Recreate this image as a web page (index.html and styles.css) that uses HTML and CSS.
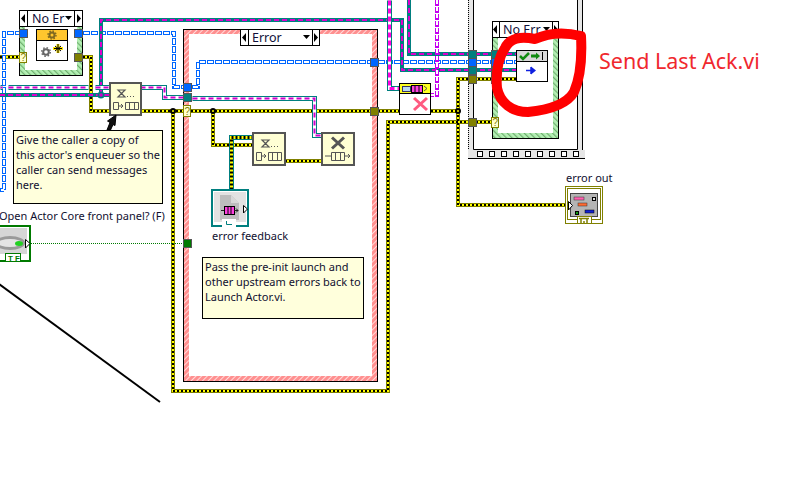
FILE: index.html
```html
<!DOCTYPE html>
<html lang="en">
<head>
<meta charset="utf-8">
<title>Send Last Ack.vi</title>
<link rel="stylesheet" href="styles.css">
</head>
<body>
<main class="canvas">
<svg class="diagram" width="788" height="482" viewBox="0 0 788 482" aria-hidden="true">
<defs>
  <pattern id="pinkHatch" width="4" height="4" patternUnits="userSpaceOnUse" patternTransform="rotate(45)">
    <rect width="4" height="4" fill="#ff8f8f"/><rect width="1" height="4" fill="#ffdada"/>
  </pattern>
  <pattern id="greenHatch" width="4" height="4" patternUnits="userSpaceOnUse" patternTransform="rotate(-45)">
    <rect width="4" height="4" fill="#b4efb4"/><rect width="1.2" height="4" fill="#6fae6f"/>
  </pattern>
  <path id="errWires" d="M0 57H19M83 57H91V111H110M140 111H183M191 111H370M378 111H400M431 111H458M173 111V391H388V122H491M213 111V145H253M285 161H322M458 111V79H516M458 111V205H568"/>
  <path id="thinTeal" d="M0 95H110M101 95V20H402V70H516M409 0V54H516"/>
  <path id="thickTeal" d="M0 87H2M8 87H88M95 87H110M140 87H164V97H183M192 98H314V135H322"/>
  <path id="blueWires" d="M4 190V33H19M83 33H174V87H183M192 87H198V62H370M378 62H516M0 190H4"/>
  <path id="pinkWire" d="M389 0V88H400"/>
  <path id="violetWire" d="M437 0V95H431"/>
  <path id="feedback" d="M231 189V137H253"/>
</defs>

<!-- right-hand sequence frame -->
<rect class="band" x="468" y="-4" width="114" height="162"/>
<rect class="white" x="473" y="-4" width="104" height="153"/>
<path class="frameLine" d="M473.5 0V149.5H577.5V0M582.5 0V150"/>
<path class="dotLine" d="M468.5 0V158"/>
<rect class="band" x="468" y="150" width="117" height="8"/>
<path class="frameLine" d="M468 158.5H585"/>
<g class="holes">
  <rect x="477.5" y="151.5" width="5" height="5"/><rect x="489.5" y="151.5" width="5" height="5"/><rect x="501.5" y="151.5" width="5" height="5"/>
  <rect x="513.5" y="151.5" width="5" height="5"/><rect x="525.5" y="151.5" width="5" height="5"/><rect x="537.5" y="151.5" width="5" height="5"/>
  <rect x="549.5" y="151.5" width="5" height="5"/><rect x="561.5" y="151.5" width="5" height="5"/><rect x="573.5" y="151.5" width="5" height="5"/>
</g>

<!-- case structures -->
<rect class="caseGreen" x="19.5" y="26.5" width="63" height="49"/>
<rect class="white" x="25" y="27" width="52" height="43"/>
<rect class="casePink" x="183.5" y="29.5" width="194" height="352"/>
<rect class="white" x="189" y="34" width="183" height="342"/>
<rect class="caseGreen" x="492.5" y="37.5" width="66" height="101"/>
<rect class="white" x="498" y="38" width="55" height="95"/>

<!-- wires -->
<use href="#errWires" class="errBase"/><use href="#errWires" class="errFill"/><use href="#errWires" class="errDash"/>
<use href="#blueWires" class="blueBase"/><use href="#blueWires" class="blueCore"/>
<use href="#thinTeal" class="tealThin"/><use href="#thinTeal" class="tealThinDash"/>
<use href="#violetWire" class="violetBase"/><use href="#violetWire" class="violetCore"/>
<g transform="translate(.5 .5)">
<use href="#thickTeal" class="tealThick"/><use href="#thickTeal" class="tealCore"/><use href="#thickTeal" class="tealThickDash"/>
<use href="#pinkWire" class="tealThick"/><use href="#pinkWire" class="tealCore"/><use href="#pinkWire" class="pinkDash"/>
<use href="#feedback" class="tealThick"/><use href="#feedback" class="fbFill"/><use href="#feedback" class="fbDash"/>
</g>
<path class="boolWire" d="M31 243.500H183"/>
<circle class="juncTeal" cx="101" cy="95" r="3.500"/><circle class="juncViolet" cx="101" cy="95" r="1.800"/>
<circle class="juncErr" cx="173" cy="111" r="2"/><circle class="juncErr" cx="213" cy="111" r="2"/><circle class="juncErr" cx="458" cy="111" r="2"/>

<!-- selectors -->
<g>
  <rect class="sel" x="19.5" y="10.5" width="63" height="16"/><path class="frameLine" d="M27.5 10V26M74.5 10V26"/>
  <path class="tri" d="M25 14V23L21 18.500ZM77 14V23L81 18.500ZM65 16H72L68.500 20Z"/>
  <text class="selText" x="32" y="23">No Er</text>
  <rect class="sel" x="240.5" y="29.500" width="79" height="16"/><path class="frameLine" d="M248.500 29V45M312.500 29V45"/>
  <path class="tri" d="M246 33V42L242 37.500ZM314 33V42L318 37.500ZM303 35H310L306.500 39Z"/>
  <text class="selText" x="252" y="42">Error</text>
  <rect class="sel" x="492.5" y="21.500" width="66" height="16"/><path class="frameLine" d="M499.500 21V37M552.500 21V37"/>
  <path class="tri" d="M497 25V34L493 29.500ZM554 25V34L558 29.500ZM543 27H550L546.500 31Z"/>
  <text class="selText" x="503" y="34">No Err</text>
</g>

<!-- tunnels -->
<rect class="tBlue" x="19.500" y="29.500" width="8" height="8"/><rect class="tBlue" x="74.500" y="29.500" width="8" height="8"/>
<rect class="tOlive" x="74.500" y="53.500" width="8" height="8"/>
<rect class="tBlue" x="183.500" y="83.500" width="8" height="8"/><rect class="tTeal" x="183.500" y="93.500" width="8" height="8"/>
<rect class="tBlue" x="370.500" y="58.500" width="8" height="8"/><rect class="tOlive" x="370.500" y="107.500" width="8" height="8"/>
<rect class="tGreen" x="183.500" y="239.500" width="8" height="8"/>
<rect class="tTeal" x="468.500" y="50.500" width="8" height="8"/><rect class="tBlue" x="468.500" y="58.500" width="8" height="8"/>
<rect class="tTeal" x="468.500" y="66.500" width="8" height="8"/><rect class="tOlive" x="468.500" y="75.500" width="8" height="8"/>
<rect class="tOlive" x="468.500" y="118.500" width="8" height="8"/>
<rect class="tTeal" x="491.500" y="50.500" width="6" height="8"/><rect class="tBlue" x="491.500" y="58.500" width="6" height="8"/>
<rect class="tTeal" x="491.500" y="66.500" width="6" height="8"/><rect class="tOlive" x="491.500" y="75.500" width="6" height="8"/>
<g>
  <rect class="tQ" x="19.500" y="52.500" width="7" height="10"/><text class="qText" x="20.500" y="61">?</text>
  <rect class="tQ" x="183.500" y="105.500" width="7" height="11"/><text class="qText" x="184.500" y="115">?</text>
  <rect class="tQ" x="491.500" y="117.500" width="7" height="10"/><text class="qText" x="492.500" y="126">?</text>
</g>

<!-- inner node of the first case -->
<rect class="nodeWhite" x="36.500" y="29.500" width="31" height="31"/>
<rect class="nodeYellow" x="36.500" y="29.500" width="31" height="11"/>
<circle class="gearCore" cx="52" cy="35" r="2.500"/><circle class="gearTeeth" cx="52" cy="35" r="4"/>
<circle class="gearCoreGray" cx="46" cy="52" r="2.800"/><circle class="gearTeethGray" cx="46" cy="52" r="4.300"/>
<path class="sparkGlow" d="M58 44V53M53 48.500H63"/>
<path class="spark" d="M58 44V53M54 48.500H62M55 46L61 51M55 51L61 46"/>

<!-- enqueuer nodes -->
<g>
  <rect class="fn" x="110" y="83" width="31" height="32"/>
  <path class="glyph" d="M118 90H125L121.500 93.500L125 97H118L121.500 93.500ZM127 96.500H128M130 96.500H131M133 96.500H134"/>
  <path class="glyphThin" d="M113.500 102.500H118.500V109.500H113.500ZM118 106H123M121 104L123 106L121 108M125.500 102.500H138.500V109.500H125.500ZM129.500 102.500V109.500M134.500 102.500V109.500"/>
  <rect class="fn" x="253" y="133" width="32" height="32"/>
  <path class="glyph" d="M262 140H269L265.500 143.500L269 147H262L265.500 143.500ZM271 146.500H272M274 146.500H275M277 146.500H278"/>
  <path class="glyphThin" d="M256.500 152.500H261.500V160.500H256.500ZM261 156H266M264 154L266 156L264 158M268.500 152.500H281.500V160.500H268.500ZM272.500 152.500V160.500M277.500 152.500V160.500"/>
  <rect class="fn" x="322" y="133" width="32" height="32"/>
  <path class="glyphX" d="M332 137.500L344 148.500M344 137.500L332 148.500"/>
  <path class="glyphThin" d="M325 156H331M331.500 152.500H344.500V160.500H331.500ZM335.500 152.500V160.500M340.500 152.500V160.500M344 156H350M348 154L350 156L348 158"/>
</g>

<!-- release node -->
<rect class="nodeWhite" x="399.500" y="83.500" width="31" height="31"/>
<rect class="nodeBand" x="399.500" y="83.500" width="31" height="10"/>
<rect class="env" x="402.500" y="86.500" width="8" height="5"/>
<rect class="queue" x="411.500" y="85.500" width="11" height="7"/>
<path class="queueBars" d="M415 85V92M419 85V92"/>
<path class="glyphThin" d="M424 86L427 88.500L424 91"/>
<path class="pinkX" d="M414 98L427 110M427 98L414 110"/>

<!-- acknowledge node -->
<rect class="nodeWhite" x="516.500" y="50.500" width="31" height="31"/>
<rect class="nodeGray" x="516.500" y="50.500" width="31" height="11"/>
<path class="check" d="M520 56L523 59L529 53"/>
<path class="greenArrow" d="M531 54.500H536V52.500L540 56L536 59.500V57.500H531Z"/>
<path class="frameLine" d="M542.500 52V60"/>
<path class="blueArrow" d="M526 70.500H534M531 67V74"/>
<path class="blueHead" d="M531 66.500L536 70.500L531 74.500Z"/>

<!-- error feedback terminal -->
<rect class="fbOuter" x="212" y="190" width="36" height="36"/>
<rect class="fbInner" x="214" y="192" width="32" height="30"/>
<path class="fbPage" d="M220 195H231L239 203V220H220Z"/>
<path class="fbFold" d="M231 195L239 203H231Z"/>
<rect class="queue" x="224.500" y="206.500" width="10" height="8"/>
<path class="queueBars" d="M228 206V215M231 206V215"/>
<path class="glyphDark" d="M221 210.500H224M234 210.500H238M236 208.500L238 210.500L236 212.500"/>
<path class="termTri" d="M243.500 205.500L247.500 209L243.500 213Z"/>
<rect class="fbTab" x="222" y="219" width="14" height="8"/>
<path class="glyphTeal" d="M226.500 221V224.500H232"/>

<!-- error out terminal -->
<rect class="eoOuter" x="565.500" y="186.500" width="37" height="37"/>
<rect class="eoMid" x="567.500" y="188.500" width="33" height="31"/>
<rect class="eoInner" x="570.500" y="193.500" width="27" height="23"/>
<rect class="eoPink" x="574" y="197" width="10" height="3"/><rect class="eoSmall" x="592.500" y="197.500" width="3" height="3"/>
<rect class="eoOrange" x="578" y="203" width="9" height="3"/>
<rect class="eoGreen" x="575.500" y="211.500" width="3" height="3"/><rect class="eoBlue" x="585" y="210" width="9" height="3"/>
<rect class="eoTab" x="577.500" y="216.500" width="14" height="7"/>
<path class="eoGlyph" d="M579 218.500H589M581 218V224M587 218V224M584 221V224"/>
<path class="termTri" d="M568.500 201.500L572.500 205.500L568.500 210Z"/>

<!-- boolean control -->
<rect class="boolOuter" x="-10" y="226" width="40" height="35"/>
<rect class="boolInner" x="-8" y="228" width="35" height="26"/>
<ellipse class="boolLed" cx="10" cy="243" rx="15" ry="7"/>
<ellipse class="boolLedIn" cx="10" cy="243" rx="12" ry="4"/>
<ellipse class="boolGlow" cx="19" cy="243.500" rx="4" ry="2.500"/>
<path class="termTri" d="M25.500 239.500L30 243.500L25.500 248Z"/>
<rect class="boolTab" x="5.500" y="253.500" width="15" height="8"/>
<text class="boolText" x="8" y="260.500">T F</text>

<!-- comment arrow and free diagonal -->
<path class="commentArrow" d="M116 115L107.500 121L110 122.500L107 130L110.500 130L113 124.500L115 125.500Z"/>
<path class="diagonal" d="M-1 284L160 402"/>

<!-- hand-drawn marker -->
<path class="marker" d="M535 39C520 36 510 38 505 48C497 60 496 76 497 88C500 103 512 112 528 112C548 110 567 104 574 92C581 76 582 55 581 36C565 32 548 33 535 39Z"/>
</svg>

<p class="note noteA">Give the caller a copy of this actor's enqueuer so the caller can send messages here.</p>
<p class="note noteB">Pass the pre-init launch and other upstream errors back to Launch Actor.vi.</p>
<span class="label labelOpen">Open Actor Core front panel? (F)</span>
<span class="label labelFeedback">error feedback</span>
<span class="label labelOut">error out</span>
<span class="callout">Send Last Ack.vi</span>
</main>
</body>
</html>
```
FILE: styles.css
```css
html, body { margin: 0; padding: 0; background: #fff; }
.canvas { position: relative; width: 788px; height: 482px; overflow: hidden; background: #fff; font-family: "Noto Sans", "Liberation Sans", sans-serif; }
.diagram { position: absolute; left: 0; top: 0; display: block; }

.white { fill: #fff; }
.band { fill: #e6e6e6; }
.frameLine { fill: none; stroke: #000; stroke-width: 1; }
.dotLine { fill: none; stroke: #000; stroke-width: 1; stroke-dasharray: 1 1; }
.holes rect { fill: #fff; stroke: #000; stroke-width: 1; }
.caseGreen { fill: url(#greenHatch); stroke: #000; stroke-width: 1; }
.casePink { fill: url(#pinkHatch); stroke: #000; stroke-width: 1; }

.errBase, .errFill, .errDash, .fbFill, .fbDash, .blueBase, .blueCore, .tealThin, .tealThinDash, .tealThick, .tealCore, .tealThickDash, .pinkDash, .violetBase, .violetCore, .boolWire { fill: none; }
.errBase { stroke: #808000; stroke-width: 4; }
.errFill { stroke: #ffff00; stroke-width: 2; }
.errDash { stroke: #000; stroke-width: 2; stroke-dasharray: 2 2; }
.fbFill { stroke: #ffff00; stroke-width: 3; }
.fbDash { stroke: #000; stroke-width: 3; stroke-dasharray: 2 2; }
.blueBase { stroke: #0066ff; stroke-width: 4; stroke-dasharray: 7 1; }
.blueCore { stroke: #fff; stroke-width: 2; stroke-dasharray: 5 3; stroke-dashoffset: -1; }
.tealThin { stroke: #007f7f; stroke-width: 4; }
.tealThinDash { stroke: #dd00cc; stroke-width: 2; stroke-dasharray: 5 3; }
.tealThick { stroke: #007f7f; stroke-width: 5; }
.tealCore { stroke: #fff; stroke-width: 3; }
.tealThickDash { stroke: #cc00cc; stroke-width: 2; stroke-dasharray: 5 3; }
.pinkDash { stroke: #ff00e0; stroke-width: 3; stroke-dasharray: 5 3; }
.violetBase { stroke: #c400f0; stroke-width: 4; stroke-dasharray: 6 1; }
.violetCore { stroke: #fff; stroke-width: 2; stroke-dasharray: 4 3; }
.boolWire { stroke: #007a00; stroke-width: 1; stroke-dasharray: 1 1; }
.juncTeal { fill: #007f7f; }
.juncViolet { fill: #cc00cc; }
.juncErr { fill: #ffff00; stroke: #000; stroke-width: 2; }

.sel { fill: #fff; stroke: #000; stroke-width: 1; }
.tri { fill: #000; }
.selText { font-family: "Noto Sans", "Liberation Sans", sans-serif; font-size: 12.5px; fill: #10103a; }

.tBlue { fill: #0066ff; stroke: #555; stroke-width: 1; }
.tTeal { fill: #007f7f; stroke: #555; stroke-width: 1; }
.tOlive { fill: #808000; stroke: #555; stroke-width: 1; }
.tGreen { fill: #007a00; stroke: #555; stroke-width: 1; }
.tQ { fill: #ffffd0; stroke: #808000; stroke-width: 1; }
.qText { font-family: "Liberation Sans", sans-serif; font-size: 10px; fill: #808000; }

.nodeWhite { fill: #fff; stroke: #000; stroke-width: 1; }
.nodeYellow { fill: #ffc62e; stroke: #000; stroke-width: 1; }
.nodeGray { fill: #d8d8d8; stroke: #000; stroke-width: 1; }
.nodeBand { fill: #ffff20; stroke: #000; stroke-width: 1; }
.gearCore { fill: none; stroke: #806a20; stroke-width: 2; }
.gearTeeth { fill: none; stroke: #806a20; stroke-width: 1.500; stroke-dasharray: 1.500 1.640; }
.gearCoreGray { fill: none; stroke: #666; stroke-width: 2; }
.gearTeethGray { fill: none; stroke: #666; stroke-width: 1.500; stroke-dasharray: 1.500 1.880; }
.sparkGlow { fill: none; stroke: #ffe600; stroke-width: 3; }
.spark { fill: none; stroke: #000; stroke-width: 1; }
.fn { fill: #ffffd4; stroke: #555; stroke-width: 2; }
.glyph { fill: none; stroke: #555; stroke-width: 1.200; }
.glyphThin { fill: none; stroke: #555; stroke-width: 1; }
.glyphX { fill: none; stroke: #555; stroke-width: 3; }
.glyphDark { fill: none; stroke: #222; stroke-width: 1; }
.glyphTeal { fill: none; stroke: #007f7f; stroke-width: 1; }
.env { fill: #b8d8f0; stroke: #336; stroke-width: 1; }
.queue { fill: #ff40e0; stroke: #000; stroke-width: 1; }
.queueBars { fill: none; stroke: #000; stroke-width: 1; }
.pinkX { fill: none; stroke: #ff5a80; stroke-width: 3; }
.check { fill: none; stroke: #108a10; stroke-width: 2.500; }
.greenArrow { fill: #108a10; }
.blueArrow { fill: none; stroke: #1020e0; stroke-width: 1.500; }
.blueHead { fill: #1020e0; }

.fbOuter { fill: #fff; stroke: #007f7f; stroke-width: 2; }
.fbInner { fill: #e2e2e2; }
.fbPage { fill: #bdbdbd; }
.fbFold { fill: #d8d8d8; }
.fbTab { fill: #fff; stroke: none; }
.termTri { fill: #fff; stroke: #000; stroke-width: 1; }

.eoOuter { fill: #fff; stroke: #808000; stroke-width: 1; }
.eoMid { fill: #fff; stroke: #808000; stroke-width: 1; }
.eoInner { fill: #b4b4b4; stroke: #444; stroke-width: 1; }
.eoPink { fill: #ff60b0; stroke: #333; stroke-width: .5; }
.eoSmall { fill: #ddd; stroke: #000; stroke-width: 1; }
.eoOrange { fill: #ff6a30; stroke: #333; stroke-width: .5; }
.eoGreen { fill: #10a010; stroke: #000; stroke-width: 1; }
.eoBlue { fill: #1020d0; stroke: #000; stroke-width: .5; }
.eoTab { fill: #fff; stroke: #808000; stroke-width: 1; }
.eoGlyph { fill: none; stroke: #808000; stroke-width: 1.500; }

.boolOuter { fill: #fff; stroke: #007a00; stroke-width: 2; }
.boolInner { fill: #d6d6d6; }
.boolLed { fill: #9a9a9a; }
.boolLedIn { fill: #e4e4e4; }
.boolGlow { fill: #22d022; }
.boolTab { fill: #fff; stroke: #007a00; stroke-width: 1; }
.boolText { font-family: "Liberation Sans", sans-serif; font-size: 8px; font-weight: 700; fill: #007a00; }

.commentArrow { fill: #111; stroke: #000; stroke-width: 1; }
.diagonal { fill: none; stroke: #000; stroke-width: 2; }
.marker { fill: none; stroke: #ff0000; stroke-width: 10; stroke-linejoin: round; }

.note { position: absolute; margin: 0; box-sizing: border-box; background: #ffffdc; border: 1px solid #000; padding: 1px 2px; font-size: 11px; line-height: 15px; color: #101030; }
.noteA { left: 13px; top: 130px; width: 150px; height: 74px; }
.noteB { left: 202px; top: 257px; width: 162px; height: 62px; }
.label { position: absolute; white-space: nowrap; font-size: 11px; line-height: 15px; color: #101030; }
.labelOpen { left: -1px; top: 208px; }
.labelFeedback { left: 212px; top: 228px; }
.labelOut { left: 566px; top: 170px; }
.callout { position: absolute; left: 599px; top: 47px; white-space: nowrap; font-size: 21.5px; line-height: 28px; color: #f0282e; }
```
